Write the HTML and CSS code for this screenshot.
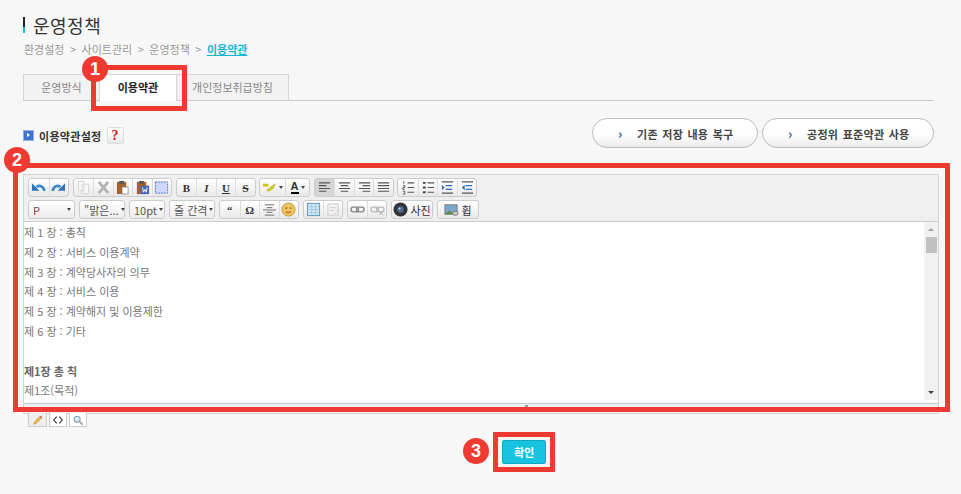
FILE: index.html
```html
<!DOCTYPE html>
<html lang="ko">
	<head>
		<meta charset="UTF-8" />
		<meta name="viewport" content="width=device-width, initial-scale=1.0" />
		<title>운영정책</title>
		<link rel="stylesheet" href="styles.css">
	</head>
	<body>
		<div class="page">
			<h1 class="page-title">운영정책</h1>
			<p class="crumbs">환경설정<span class="sep">&gt;</span>사이트관리<span class="sep">&gt;</span>운영정책<span class="sep">&gt;</span><a href="#">이용약관</a></p>

			<div class="tabs">
				<a class="tab" href="#">운영방식</a>
				<a class="tab active" href="#">이용약관</a>
				<a class="tab wide" href="#">개인정보취급방침</a>
			</div>

			<div class="section-head">
				<div class="section-title">
					<span class="section-mark"></span>
					<strong>이용약관설정</strong>
					<span class="help">?</span>
				</div>
				<div class="section-actions">
					<button class="round-btn first"><i>&rsaquo;</i>기존 저장 내용 복구</button>
					<button class="round-btn second"><i>&rsaquo;</i>공정위 표준약관 사용</button>
				</div>
			</div>

			<div class="editor">
				<div class="toolbar">
					<div class="tool-row top">
						<div class="group">
							<span class="tb"><svg viewBox="0 0 16 16"><path d="M6 7.500C9 5 13 6.500 14.500 11.500" fill="none" stroke="#3f86c8" stroke-width="3"/><path d="M1 3.500v8h8z" fill="#2f74b8"/></svg></span>
							<span class="tb"><svg viewBox="0 0 16 16"><path d="M10 7.500C7 5 3 6.500 1.500 11.500" fill="none" stroke="#3f86c8" stroke-width="3"/><path d="M15 3.500v8H7z" fill="#2f74b8"/></svg></span>
						</div>
						<div class="group">
							<span class="tb"><svg viewBox="0 0 16 16"><path d="M2.500 1.500h6v10h-6zM6.500 4.500h7v10h-7z" fill="#f7f7f7" stroke="#d2d2d2"/></svg></span>
							<span class="tb"><svg viewBox="0 0 16 16"><path d="M3 2l10 12M13 2L3 14" stroke="#b3b3b3" stroke-width="3"/></svg></span>
							<span class="tb"><svg viewBox="0 0 16 16"><rect x="2" y="2" width="10" height="13" fill="#a5622a"/><rect x="4.500" y="1" width="5" height="3" fill="#555"/><path d="M7.500 7.500h6.500v7.500H7.500z" fill="#fff" stroke="#777" stroke-width=".7"/></svg></span>
							<span class="tb"><svg viewBox="0 0 16 16"><rect x="2" y="2" width="10" height="13" fill="#a5622a"/><rect x="4.500" y="1" width="5" height="3" fill="#555"/><rect x="6" y="6" width="9" height="9" fill="#4a63b5"/><path d="M8 8l1 5 1.500-3 1.500 3 1-5" fill="none" stroke="#fff"/></svg></span>
							<span class="tb"><svg viewBox="0 0 16 16"><rect x="1.500" y="2" width="13" height="12" fill="#cfd8fb" stroke="#5a6fd0" stroke-dasharray="2 1"/></svg></span>
						</div>
						<div class="group">
							<span class="tb txt serif">B</span>
							<span class="tb txt serif slant">I</span>
							<span class="tb txt serif under">U</span>
							<span class="tb txt serif strike">S</span>
						</div>
						<div class="group">
							<span class="tb wide"><svg viewBox="0 0 16 16"><path d="M1 4h6v3H1z" fill="#c9c418"/><path d="M5 11l9-7-2 5-5 3z" fill="#d6d01c" stroke="#a8a312" stroke-width=".6"/></svg><em class="caret"></em></span>
							<span class="tb wide"><span class="font-a">A</span><em class="caret"></em></span>
						</div>
						<div class="group">
							<span class="tb on"><svg viewBox="0 0 16 16"><path class="ln" d="M2 3h12M2 6h8M2 9h12M2 12h8"/></svg></span>
							<span class="tb"><svg viewBox="0 0 16 16"><path class="ln" d="M2 3h12M4 6h8M2 9h12M4 12h8"/></svg></span>
							<span class="tb"><svg viewBox="0 0 16 16"><path class="ln" d="M2 3h12M6 6h8M2 9h12M6 12h8"/></svg></span>
							<span class="tb"><svg viewBox="0 0 16 16"><path class="ln" d="M2 3h12M2 6h12M2 9h12M2 12h12"/></svg></span>
						</div>
						<div class="group">
							<span class="tb"><svg viewBox="0 0 16 16"><path class="ln" d="M7 3h7M7 8h7M7 13h7"/><path d="M3 1v3M2 6h2v2H2v2h2M2 12h2v3H2" fill="none" stroke="#444" stroke-width=".9"/></svg></span>
							<span class="tb"><svg viewBox="0 0 16 16"><path class="ln" d="M7 3h7M7 8h7M7 13h7"/><path d="M2 2h3v2H2zM2 7h3v2H2zM2 12h3v2H2z" fill="#444"/></svg></span>
							<span class="tb"><svg viewBox="0 0 16 16"><path class="ln" d="M2 2h12M2 14h12"/><path d="M6 6h7M6 10h7" stroke="#2f6fc4" stroke-width="1.500"/><path d="M2 5v6l3-3z" fill="#2f6fc4"/></svg></span>
							<span class="tb"><svg viewBox="0 0 16 16"><path class="ln" d="M2 2h12M2 14h12"/><path d="M6 6h7M6 10h7" stroke="#2f6fc4" stroke-width="1.500"/><path d="M5 5v6L2 8z" fill="#2f6fc4"/></svg></span>
						</div>
					</div>
					<div class="tool-row">
						<span class="sel w47">P<em class="caret"></em></span>
						<span class="sel w46">"맑은...<em class="caret"></em></span>
						<span class="sel w36">10pt<em class="caret"></em></span>
						<span class="sel w46">줄 간격<em class="caret"></em></span>
						<div class="group">
							<span class="tb txt serif">“</span>
							<span class="tb txt serif">Ω</span>
							<span class="tb"><svg viewBox="0 0 16 16"><path d="M3 3h10M5 6h6M1 8.500h14M5 11h6M3 14h10" fill="none" stroke="#666"/></svg></span>
							<span class="tb"><svg viewBox="0 0 16 16"><circle cx="8" cy="8" r="7" fill="#eec55f" stroke="#c99a3a"/><circle cx="5.800" cy="6.500" r="1" fill="#8a6420"/><circle cx="10.200" cy="6.500" r="1" fill="#8a6420"/><path d="M4.500 10c1 2.500 6 2.500 7 0z" fill="#c0703c"/></svg></span>
						</div>
						<div class="group pair">
							<span class="tb"><svg viewBox="0 0 16 16"><rect x="1.500" y="1.500" width="13" height="13" fill="#cfe6f7" stroke="#5c95bd"/><path d="M1.500 5h13M1.500 8h13M1.500 11h13M6 1.500v13M10 1.500v13" stroke="#8cb9d8" stroke-width=".6"/></svg></span>
							<span class="tb"><svg viewBox="0 0 16 16"><rect x="2" y="2" width="11" height="12" fill="#f2f2f2" stroke="#ccc"/><path d="M4 6h7M4 9h5M9 13l5-5" stroke="#ccc"/></svg></span>
						</div>
						<div class="group pair">
							<span class="tb"><svg viewBox="0 0 16 16"><rect x="1" y="5.500" width="8" height="5" rx="2.500" fill="none" stroke="#888" stroke-width="1.500"/><rect x="7" y="5.500" width="8" height="5" rx="2.500" fill="none" stroke="#888" stroke-width="1.500"/></svg></span>
							<span class="tb"><svg viewBox="0 0 16 16"><rect x="1" y="5.500" width="8" height="5" rx="2.500" fill="none" stroke="#bbb" stroke-width="1.500"/><rect x="7" y="5.500" width="8" height="5" rx="2.500" fill="none" stroke="#bbb" stroke-width="1.500"/><path d="M10 10l4 4M14 10l-4 4" stroke="#aaa"/></svg></span>
						</div>
						<div class="group">
							<span class="tb media"><svg viewBox="0 0 16 16"><circle cx="8" cy="8" r="7.500" fill="#333"/><circle cx="8" cy="8" r="3.500" fill="#48668e"/><circle cx="7" cy="7" r="1.200" fill="#bcd"/></svg>사진</span>
						</div>
						<div class="group">
							<span class="tb media"><svg viewBox="0 0 16 16"><rect x="1" y="3" width="13" height="10" fill="#7aa6cf" stroke="#777"/><path d="M1 13l5-4 4 4z" fill="#5b8a4a"/><rect x="9" y="10" width="6" height="4" rx="2" fill="#ccc" stroke="#777"/></svg>휩</span>
						</div>
					</div>
				</div>
				<div class="editor-body">
					<div class="doc">
						<p>제 1 장 : 총칙</p>
						<p>제 2 장 : 서비스 이용계약</p>
						<p>제 3 장 : 계약당사자의 의무</p>
						<p>제 4 장 : 서비스 이용</p>
						<p>제 5 장 : 계약해지 및 이용제한</p>
						<p>제 6 장 : 기타</p>
						<p>&nbsp;</p>
						<p class="bold">제1장 총 칙</p>
						<p>제1조(목적)</p>
					</div>
					<div class="scrollbar">
						<span class="arrow up"></span>
						<span class="thumb"></span>
						<span class="arrow down"></span>
					</div>
				</div>
				<div class="resize-bar"><span></span></div>
			</div>

			<div class="mode-tabs">
				<span class="mode on"><svg viewBox="0 0 14 14"><path d="M2 12l1-3 6-6 2 2-6 6z" fill="#e9b949" stroke="#b5812a" stroke-width=".6"/><path d="M9 3l1-1 2 2-1 1z" fill="#d9534f"/></svg></span>
				<span class="mode"><svg viewBox="0 0 14 14"><path d="M5.500 3L2 7l3.500 4M8.500 3L12 7l-3.500 4" fill="none" stroke="#333" stroke-width="1.300"/></svg></span>
				<span class="mode"><svg viewBox="0 0 14 14"><circle cx="6" cy="6" r="3.500" fill="#dfeaf5" stroke="#7c9dbd" stroke-width="1.200"/><path d="M8.500 8.500l4 4" stroke="#999" stroke-width="1.800"/></svg></span>
			</div>

			<div class="confirm-row">
				<button class="confirm">확인</button>
			</div>
		</div>

		<!-- 안내용 표시 -->
		<div class="mark mark-tab"></div>
		<div class="mark mark-editor"></div>
		<div class="mark mark-confirm"></div>
		<span class="badge badge-1">1</span>
		<span class="badge badge-2">2</span>
		<span class="badge badge-3">3</span>
	</body>
</html>
```

FILE: styles.css
```css
html,
body {
	margin: 0;
	padding: 0;
	height: 494px;
	overflow: hidden;
	background-color: #f7f7f7;
}
body {
	position: relative;
	font-family: "Noto Sans CJK KR", "Noto Sans", sans-serif;
	font-size: 11px;
	color: #777;
}
.page {
	padding: 14px 0 0 23px;
	width: 916px;
}
.page-title {
	margin: 0;
	padding-left: 10px;
	height: 22px;
	line-height: 22px;
	font-size: 18px;
	font-weight: 400;
	letter-spacing: 0.5px;
	color: #333;
	background: linear-gradient(#222 0 65%, #17c1de 65%) no-repeat 0 3px / 2px 16px;
}
.crumbs {
	margin: 4px 0 0 1px;
	height: 18px;
	line-height: 18px;
	font-size: 11px;
	color: #999;
	white-space: nowrap;
}
.sep {
	margin: 0 5.500px;
}
.crumbs a {
	color: #17b5d3;
	font-weight: 700;
}
.tabs {
	display: flex;
	margin-top: 16px;
	width: 911px;
	height: 27px;
	box-sizing: border-box;
	border-bottom: 1px solid #ccc;
}
.tab {
	width: 77px;
	height: 26px;
	box-sizing: border-box;
	border: 1px solid #d5d5d5;
	border-bottom: 0;
	background-color: #f2f2f2;
	text-align: center;
	line-height: 25px;
	color: #888;
	text-decoration: none;
}
.tab + .tab {
	border-left: 0;
}
.tab.active {
	height: 27px;
	background-color: #fff;
	color: #222;
	font-weight: 700;
}
.tab.wide {
	width: 112px;
}
.section-head {
	display: flex;
	justify-content: space-between;
	align-items: center;
	margin-top: 17px;
	width: 911px;
	height: 30px;
}
.section-title {
	display: flex;
	align-items: center;
	margin-top: 5px;
	color: #333;
	letter-spacing: 0.3px;
}
.section-mark {
	position: relative;
	width: 11px;
	height: 11px;
	margin-right: 5px;
	background: #3f74cc;
	border: 1px solid #8fb0e2;
	box-sizing: border-box;
}
.section-mark::after {
	content: "";
	position: absolute;
	left: 3px;
	top: 2px;
	border: 2.500px solid transparent;
	border-left: 3px solid #fff;
	border-right: 0;
}
.help {
	width: 17px;
	height: 17px;
	margin-left: 5px;
	border: 1px solid #ddd;
	border-radius: 2px;
	background: linear-gradient(#fff, #e9e9e9);
	box-sizing: border-box;
	text-align: center;
	line-height: 15px;
	font-family: "Liberation Serif", serif;
	font-size: 14px;
	font-weight: 700;
	color: #d0101c;
}
.section-actions {
	display: flex;
	gap: 4px;
}
.round-btn {
	height: 30px;
	padding: 0 0 0 25px;
	border: 1px solid #bdbdbd;
	border-radius: 15px;
	background: linear-gradient(#fff 55%, #eaeaea);
	font: 700 11px "Noto Sans CJK KR", sans-serif;
	letter-spacing: 0.3px;
	word-spacing: 1px;
	text-align: left;
	color: #444;
}
.round-btn i {
	display: inline-block;
	width: 19px;
	font-style: normal;
	font-size: 13px;
	color: #2a55a5;
}
.round-btn.first {
	width: 166px;
}
.round-btn.second {
	width: 172px;
}
.editor {
	margin-top: 26px;
	width: 916px;
	border: 1px solid #d3d3d3;
	border-bottom: 0;
	box-sizing: border-box;
}
.toolbar {
	height: 47px;
	box-sizing: border-box;
	padding: 3px 0 0 4px;
	background-color: #efefef;
	border-bottom: 1px solid #ccc;
}
.tool-row {
	display: flex;
	gap: 4px;
	height: 19px;
	margin-bottom: 3px;
}
.tool-row.top {
	gap: 3.600px;
}
.group {
	display: flex;
	height: 19px;
	box-sizing: border-box;
	border: 1px solid #ccc;
	border-radius: 3px;
	background: linear-gradient(#fff, #e9e9e9);
}
.tb {
	display: flex;
	align-items: center;
	justify-content: center;
	width: 19.500px;
	height: 17px;
	box-sizing: border-box;
	border-left: 1px solid #ddd;
	color: #333;
}
.tb:first-child {
	border-left: 0;
}
.pair .tb {
	width: 19px;
}
.tb.on {
	background: #d5d5d5;
}
.tb.wide {
	width: 24.500px;
}
.tb svg {
	flex: none;
	width: 15px;
	height: 15px;
}
.ln {
	fill: none;
	stroke: #555;
	stroke-width: 1.200;
}
.txt {
	font-size: 11px;
}
.serif {
	font-family: "Liberation Serif", serif;
	font-weight: 700;
}
.slant {
	font-style: italic;
}
.under {
	text-decoration: underline;
}
.strike {
	text-decoration: line-through;
}
.font-a {
	font-weight: 700;
	font-family: "Liberation Sans", sans-serif;
	border-bottom: 2px solid #000;
	line-height: 11px;
	color: #333;
}
.caret {
	flex: none;
	width: 0;
	height: 0;
	margin-left: 2px;
	border: 2.500px solid transparent;
	border-top: 3px solid #444;
	border-bottom: 0;
}
.sel {
	display: flex;
	align-items: center;
	justify-content: space-between;
	height: 19px;
	padding: 0 3px 0 4px;
	box-sizing: border-box;
	border: 1px solid #ccc;
	border-radius: 3px;
	background: linear-gradient(#fff, #ececec);
	color: #555;
	white-space: nowrap;
}
.w47 {
	width: 47px;
}
.w36 {
	width: 36px;
}
.w46 {
	width: 46px;
}
.tb.media {
	width: 40px;
	gap: 2px;
	border-left: 0;
}
.editor-body {
	display: flex;
	height: 181px;
	background-color: #fff;
	overflow: hidden;
}
.doc {
	flex: 1;
	padding-top: 1px;
	line-height: 19.800px;
	color: #777;
}
.doc p {
	margin: 0;
}
.doc .bold {
	font-weight: 700;
	color: #666;
}
.scrollbar {
	position: relative;
	width: 14px;
	margin-bottom: 3px;
	background-color: #f1f1f1;
}
.thumb {
	position: absolute;
	top: 15px;
	left: 2px;
	width: 11px;
	height: 16px;
	background-color: #c1c1c1;
}
.arrow {
	position: absolute;
	left: 4px;
	width: 0;
	height: 0;
	border: 3px solid transparent;
}
.arrow.up {
	top: 6px;
	border-top: 0;
	border-bottom: 3px solid #a3a3a3;
}
.arrow.down {
	bottom: 6px;
	border-bottom: 0;
	border-top: 3px solid #444;
}
.resize-bar {
	height: 9px;
	padding-left: 501px;
	background-color: #efefef;
	border-top: 1px solid #ccc;
	border-bottom: 1px solid #d3d3d3;
}
.resize-bar span {
	display: block;
	width: 3px;
	height: 2px;
	margin-top: 1px;
	background-color: #999;
}
.mode-tabs {
	display: flex;
	gap: 2px;
	margin: -1px 0 0 5px;
}
.mode {
	display: flex;
	align-items: center;
	justify-content: center;
	width: 18px;
	height: 14px;
	box-sizing: border-box;
	border: 1px solid #ccc;
	border-top: 0;
	background-color: #fff;
}
.mode.on {
	width: 19px;
	background-color: #eee;
}
.mode svg {
	width: 12px;
	height: 12px;
}
.confirm-row {
	margin: 13px 0 0 479px;
}
.confirm {
	display: block;
	width: 44px;
	height: 24px;
	padding: 0;
	border: 1px solid #12a8c4;
	border-radius: 2px;
	background-color: #17c3df;
	font: 700 11px "Noto Sans CJK KR", sans-serif;
	color: #fff;
}
.mark {
	position: absolute;
	box-sizing: border-box;
	border: 5px solid #ee3a30;
}
.mark-tab {
	left: 91px;
	top: 65px;
	width: 96px;
	height: 46px;
}
.mark-editor {
	left: 13px;
	top: 163px;
	width: 937px;
	height: 249px;
}
.mark-confirm {
	left: 493px;
	top: 432px;
	width: 62px;
	height: 40px;
}
.badge {
	position: absolute;
	width: 26px;
	height: 26px;
	border-radius: 50%;
	background-color: #ee3a30;
	text-align: center;
	font: 700 18px/26px "Liberation Sans", sans-serif;
	color: #fff;
}
.badge-1 {
	left: 82px;
	top: 56px;
}
.badge-2 {
	left: 4px;
	top: 147px;
}
.badge-3 {
	left: 463px;
	top: 438px;
}
```
